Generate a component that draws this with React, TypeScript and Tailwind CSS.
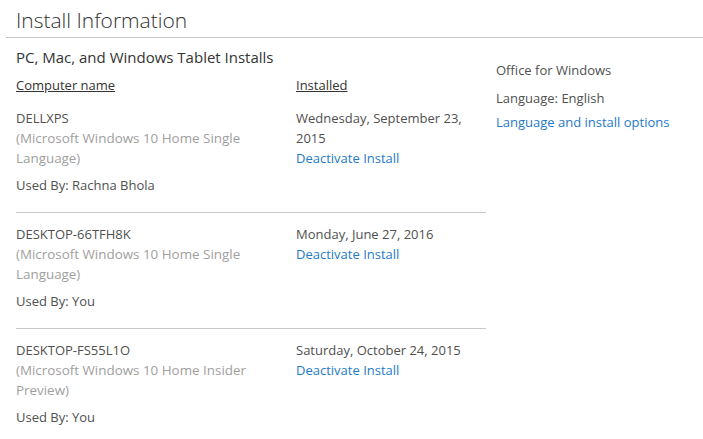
import React from "react";

const font = { fontFamily: '"Open Sans", "Noto Sans", "Liberation Sans", sans-serif' };

type Row = {
  name: string;
  os: [string, string];
  date: string[];
  user: string;
};

const rows: Row[] = [
  {
    name: "DELLXPS",
    os: ["(Microsoft Windows 10 Home Single", "Language)"],
    date: ["Wednesday, September 23,", "2015"],
    user: "Used By: Rachna Bhola",
  },
  {
    name: "DESKTOP-66TFH8K",
    os: ["(Microsoft Windows 10 Home Single", "Language)"],
    date: ["Monday, June 27, 2016"],
    user: "Used By: You",
  },
  {
    name: "DESKTOP-FS55L1O",
    os: ["(Microsoft Windows 10 Home Insider", "Preview)"],
    date: ["Saturday, October 24, 2015"],
    user: "Used By: You",
  },
];

export default function App() {
  return (
    <div className="w-[703px] h-[439px] bg-white overflow-hidden pl-[6px] text-[#505050]" style={font}>
      <div className="pl-[10px] pt-[4px] pb-[1px] border-b border-[#c8c8c8] text-[21px] leading-[32px] font-light text-[#333]">
        Install Information
      </div>
      <div className="flex pl-[10px]">
        <div className="w-[470px]">
          <div className="mt-[8px] text-[15px] leading-[22px] text-[#333]">PC, Mac, and Windows Tablet Installs</div>
          <div className="flex mt-[7px] text-[13px] leading-[20px] text-[#333]">
            <div className="w-[280px]"><span className="underline">Computer name</span></div>
            <div><span className="underline">Installed</span></div>
          </div>
          <div className="mt-[13px]">
            {rows.map((r, i) => (
              <div
                key={r.name}
                className={`flex text-[13px] leading-[20px] whitespace-nowrap ${i === 0 ? "pt-0" : "pt-[11px]"} ${i < rows.length - 1 ? "pb-[17px] border-b border-[#c8c8c8]" : ""}`}
              >
                <div className="w-[280px]">
                  <div>{r.name}</div>
                  <div className="text-[13.4px] text-[#a0a0a0]">{r.os[0]}</div>
                  <div className="text-[13.4px] text-[#a0a0a0]">{r.os[1]}</div>
                  <div className="mt-[7px]">{r.user}</div>
                </div>
                <div>
                  {r.date.map((d) => (
                    <div key={d}>{d}</div>
                  ))}
                  <div className="text-[#1f7ac8]">Deactivate Install</div>
                </div>
              </div>
            ))}
          </div>
        </div>
        <div className="pl-[10px] pt-[22px] text-[13px] leading-[20px]">
          <div>Office for Windows</div>
          <div className="mt-[8px]">Language: English</div>
          <div className="mt-[4px] text-[#1f7ac8]">Language and install options</div>
        </div>
      </div>
    </div>
  );
}
